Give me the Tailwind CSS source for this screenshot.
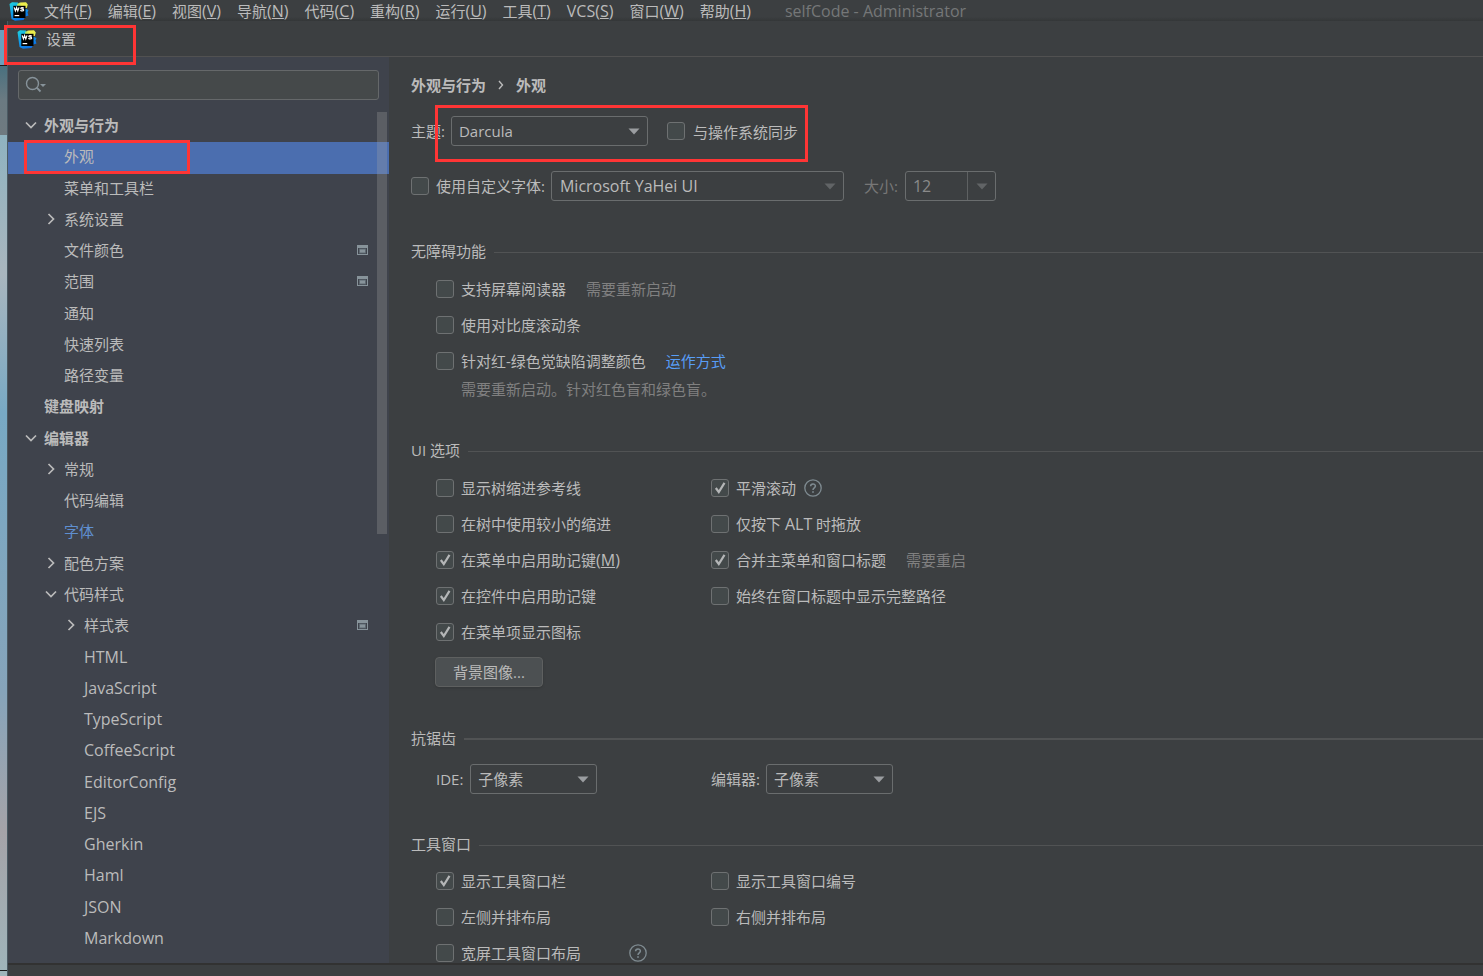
<!DOCTYPE html>
<html lang="zh-CN">
<head>
<meta charset="utf-8">
<title>设置</title>
<script src="https://cdn.jsdelivr.net/npm/@tailwindcss/browser@4"></script>
</head>
<body class="bg-[#3c3f41]">
<svg class="absolute size-0" aria-hidden="true">
  <defs>
    <linearGradient id="wsg" x1="0" y1="0" x2="0.5" y2="1">
      <stop offset="0" stop-color="#20d3dc"/><stop offset="0.45" stop-color="#11a5e8"/><stop offset="1" stop-color="#0a70e6"/>
    </linearGradient>
    <linearGradient id="wsy" x1="0" y1="0" x2="1" y2="0">
      <stop offset="0" stop-color="#8fe07a"/><stop offset="0.4" stop-color="#f2ee4a"/><stop offset="1" stop-color="#e6ee50"/>
    </linearGradient>
    <symbol id="ws" viewBox="0 0 20 20">
      <path d="M0.5 3 L3 1.2 L9 1.5 L10 6 L17 8 L19.5 9 L18.5 11.5 L19.5 14.5 L16.5 15.5 L14.5 19 L6 19.8 L2.5 18 Z" fill="url(#wsg)"/>
      <path d="M8 3 L11 1.5 L17 1.2 L18.8 3.5 L17.8 7 L8 7 Z" fill="url(#wsy)"/>
      <rect x="4.3" y="4.8" width="12.2" height="12.2" fill="#000"/>
      <path d="M5.2 6.4 L6.4 10 L7.6 6.6 L8.8 10 L10 6.4" fill="none" stroke="#fff" stroke-width="1.2"/>
      <path d="M14.8 7.2 C13.7 6.2 11.8 6.4 11.8 7.3 C12 8.4 14.8 7.8 14.7 9.1 C14.5 10.2 12.4 10.1 11.4 9.2" fill="none" stroke="#fff" stroke-width="1.2"/>
      <rect x="5.6" y="14" width="4.6" height="1.2" fill="#fff"/>
    </symbol>
    <symbol id="down" viewBox="0 0 12 8"><path d="M1 1.5 L6 6.5 L11 1.5" fill="none" stroke="currentColor" stroke-width="1.7"/></symbol>
    <symbol id="right" viewBox="0 0 8 12"><path d="M1.5 1 L6.5 6 L1.5 11" fill="none" stroke="currentColor" stroke-width="1.7"/></symbol>
    <symbol id="tri" viewBox="0 0 12 7"><path d="M0.5 0.5 H11.5 L6 6.5 Z" fill="currentColor"/></symbol>
    <symbol id="proj" viewBox="0 0 11 10"><path d="M0 0 H11 V10 H0 Z M1 3 V9 H10 V3 Z" fill="#87939a" fill-rule="evenodd"/><rect x="2.5" y="4" width="6" height="4" fill="#87939a" stroke="#5f6a72" stroke-width="1"/></symbol>
    <symbol id="tick" viewBox="0 0 18 18"><path d="M4.8 9 L7.8 13 L13.5 3.8" fill="none" stroke="#b4b6b7" stroke-width="2.2"/></symbol>
    <symbol id="help" viewBox="0 0 18 18"><circle cx="9" cy="9" r="8.2" fill="none" stroke="#7f8b91" stroke-width="1.3"/><path d="M6.6 7.3 C6.6 4.2 11.4 4.2 11.4 7.1 C11.4 8.9 9 8.9 9 11" fill="none" stroke="#7f8b91" stroke-width="1.5"/><rect x="8.2" y="12.2" width="1.6" height="1.6" fill="#7f8b91"/></symbol>
  </defs>
</svg>
<div class="relative flex h-screen flex-col overflow-hidden bg-[#3c3f41] font-['Open_Sans','Noto_Sans_CJK_SC',sans-serif] text-[15px] leading-5 text-[#bbbbbb]">
  <header class="flex h-[21px] shrink-0 items-center bg-gradient-to-b from-[#3c3f41] from-80% to-[#343738] pl-[9px]">
    <svg class="mr-[7px] size-5 shrink-0"><use href="#ws"/></svg>
    <nav class="flex whitespace-nowrap [&_span]:text-base [&_span]:leading-5">
      <button class="px-2">文件<span>(<u>F</u>)</span></button>
      <button class="px-2">编辑<span>(<u>E</u>)</span></button>
      <button class="px-2">视图<span>(<u>V</u>)</span></button>
      <button class="px-2">导航<span>(<u>N</u>)</span></button>
      <button class="px-2">代码<span>(<u>C</u>)</span></button>
      <button class="px-2">重构<span>(<u>R</u>)</span></button>
      <button class="px-2">运行<span>(<u>U</u>)</span></button>
      <button class="px-2">工具<span>(<u>T</u>)</span></button>
      <button class="px-2"><span>VCS(<u>S</u>)</span></button>
      <button class="px-2">窗口<span>(<u>W</u>)</span></button>
      <button class="px-2">帮助<span>(<u>H</u>)</span></button>
    </nav>
    <span class="ml-[26px] whitespace-nowrap text-base leading-5 text-[#757778]">selfCode - Administrator</span>
  </header>

  <div class="flex min-h-0 flex-1">
    <div class="flex w-2 shrink-0 flex-col border-r border-[#4b5a63]">
      <div class="h-[9px] bg-[#33373a]"></div>
      <div class="h-[35px] bg-[#6b9fbd]"></div>
      <div class="h-px bg-[#1c1c1c]"></div>
      <div class="h-[69px] bg-gradient-to-b from-[#48707f] via-[#6b7a82] to-[#6f7a80]"></div>
      <div class="flex flex-1 flex-col">
        <div class="flex-1 bg-gradient-to-b from-[#8fb3c0] via-[#a9b6be] to-[#78a9c4]"></div>
        <div class="flex-1 bg-gradient-to-b from-[#78a9c4] to-[#86a4ba]"></div>
        <div class="flex-1 bg-gradient-to-b from-[#86a4ba] via-[#a5a3a8] to-[#9fb4ba]"></div>
      </div>
      <div class="h-px bg-[#1c1c1c]"></div>
      <div class="h-[5px] bg-[#9fb4ba]"></div>
    </div>

    <div class="flex min-w-0 flex-1 flex-col">
      <div class="flex h-9 shrink-0 items-center border-b border-[#515151] pl-[9px]">
        <svg class="mr-[9px] size-5 shrink-0"><use href="#ws"/></svg>
        <h1>设置</h1>
      </div>

      <div class="flex min-h-0 flex-1 border-b-2 border-[#323232]">
        <aside class="flex w-[381px] shrink-0 flex-col bg-[#3f434c] pb-2 pt-[13px]">
          <label class="mx-[10px] flex h-[30px] shrink-0 items-center rounded-[3px] border border-[#65686a] bg-[#45494a] pl-1.5 text-[#87939a]">
            <svg class="h-5 w-6 shrink-0" viewBox="0 0 24 20"><circle cx="7.5" cy="8.5" r="6" fill="none" stroke="currentColor" stroke-width="1.4"/><path d="M11.7 12.7 L15.5 16.5" stroke="currentColor" stroke-width="1.8"/><path d="M15 9 H21 L18 12 Z" fill="currentColor"/></svg>
            <input type="text" aria-label="搜索设置" class="min-w-0 flex-1 bg-transparent text-[#bbbbbb] outline-none">
          </label>
          <div class="relative mt-[11px] flex min-h-0 flex-1 flex-col">
            <ul class="grid flex-1 auto-rows-fr [&>li]:flex [&>li]:items-center [&>li]:pb-[3px] [&>li>svg]:shrink-0">
              <li class="pl-[17px] font-bold"><svg class="mr-[7px] h-2 w-3"><use href="#down"/></svg>外观与行为</li>
              <li class="bg-[#4b6eaf] pl-14">外观</li>
              <li class="pl-14">菜单和工具栏</li>
              <li class="pl-[39px]"><svg class="mr-[9px] h-3 w-2"><use href="#right"/></svg>系统设置</li>
              <li class="justify-between pl-14 pr-[21px]">文件颜色<svg class="h-[10px] w-[11px]"><use href="#proj"/></svg></li>
              <li class="justify-between pl-14 pr-[21px]">范围<svg class="h-[10px] w-[11px]"><use href="#proj"/></svg></li>
              <li class="pl-14">通知</li>
              <li class="pl-14">快速列表</li>
              <li class="pl-14">路径变量</li>
              <li class="pl-9 font-bold">键盘映射</li>
              <li class="pl-[17px] font-bold"><svg class="mr-[7px] h-2 w-3"><use href="#down"/></svg>编辑器</li>
              <li class="pl-[39px]"><svg class="mr-[9px] h-3 w-2"><use href="#right"/></svg>常规</li>
              <li class="pl-14">代码编辑</li>
              <li class="pl-14 text-[#5f8fd0]">字体</li>
              <li class="pl-[39px]"><svg class="mr-[9px] h-3 w-2"><use href="#right"/></svg>配色方案</li>
              <li class="pl-[37px]"><svg class="mr-[7px] h-2 w-3"><use href="#down"/></svg>代码样式</li>
              <li class="pl-[59px] pr-[21px]"><svg class="mr-[9px] h-3 w-2"><use href="#right"/></svg>样式表<svg class="ml-auto h-[10px] w-[11px]"><use href="#proj"/></svg></li>
              <li class="pl-[76px] text-base leading-5">HTML</li>
              <li class="pl-[76px] text-base leading-5">JavaScript</li>
              <li class="pl-[76px] text-base leading-5">TypeScript</li>
              <li class="pl-[76px] text-base leading-5">CoffeeScript</li>
              <li class="pl-[76px] text-base leading-5">EditorConfig</li>
              <li class="pl-[76px] text-base leading-5">EJS</li>
              <li class="pl-[76px] text-base leading-5">Gherkin</li>
              <li class="pl-[76px] text-base leading-5">Haml</li>
              <li class="pl-[76px] text-base leading-5">JSON</li>
              <li class="pl-[76px] text-base leading-5">Markdown</li>
            </ul>
            <div class="absolute right-0.5 top-px h-1/2 w-[10px] bg-[#a6a6a6]/28"></div>
          </div>
        </aside>

        <main class="flex min-w-0 flex-1 flex-col overflow-hidden whitespace-nowrap pl-[22px] pt-[17px] [&>*]:shrink-0">
          <div class="flex h-[22px] items-center font-bold">外观与行为<svg class="mx-3 h-[10px] w-[6px]" viewBox="0 0 6 10"><path d="M1 1 L4.5 5 L1 9" fill="none" stroke="#bbbbbb" stroke-width="1.4"/></svg>外观</div>

          <div class="mt-5 flex h-[30px] items-center">
            <label for="theme">主题:</label>
            <div class="relative ml-1.5 w-[197px] text-[#9a9da0]">
              <select id="theme" class="block h-[30px] w-full appearance-none rounded-[3px] border border-[#6a6d6e] bg-[#3c3f41] px-[7px] text-[#bbbbbb]"><option>Darcula</option></select>
              <svg class="pointer-events-none absolute right-2 top-3 h-[7px] w-3"><use href="#tri"/></svg>
            </div>
            <label class="ml-[19px] flex items-center gap-2"><input type="checkbox" class="size-[18px] appearance-none rounded-[3px] border border-[#6e7172] bg-[#43494a]"><span class="pt-0.5">与操作系统同步</span></label>
          </div>

          <div class="mt-[25px] flex h-[30px] items-center">
            <label class="flex items-center gap-[7px]"><input type="checkbox" class="size-[18px] appearance-none rounded-[3px] border border-[#6e7172] bg-[#43494a]">使用自定义字体:</label>
            <div class="relative ml-1.5 w-[293px] text-[#616466]">
              <select aria-label="字体" class="block h-[30px] w-full appearance-none rounded-[3px] border border-[#6a6d6e] bg-[#3c3f41] px-2 text-base leading-5 text-[#bbbbbb]"><option>Microsoft YaHei UI</option></select>
              <svg class="pointer-events-none absolute right-2 top-3 h-[7px] w-3"><use href="#tri"/></svg>
            </div>
            <label for="size" class="ml-5 text-[#777777]">大小:</label>
            <div class="relative ml-[7px] w-[91px] text-[#616466]">
              <select id="size" class="block h-[30px] w-full appearance-none rounded-[3px] border border-[#6a6d6e] bg-[#3c3f41] px-[7px] text-base leading-5 text-[#8a8a8a]"><option>12</option></select>
              <div class="pointer-events-none absolute inset-y-px right-7 w-px bg-[#5e6162]"></div>
              <svg class="pointer-events-none absolute right-2 top-3 h-[7px] w-3"><use href="#tri"/></svg>
            </div>
          </div>

          <h2 class="mt-10 flex h-5 items-center gap-2">无障碍功能<span class="mt-0.5 h-px flex-1 bg-[#515354]"></span></h2>
          <div class="mt-[10px] flex flex-col pl-[25px]">
            <div class="flex h-9 items-center gap-5"><label class="flex items-center gap-[7px]"><input type="checkbox" class="size-[18px] appearance-none rounded-[3px] border border-[#6e7172] bg-[#43494a]">支持屏幕阅读器</label><span class="text-[#808080]">需要重新启动</span></div>
            <div class="flex h-9 items-center"><label class="flex items-center gap-[7px]"><input type="checkbox" class="size-[18px] appearance-none rounded-[3px] border border-[#6e7172] bg-[#43494a]">使用对比度滚动条</label></div>
            <div class="flex h-9 items-center gap-5"><label class="flex items-center gap-[7px]"><input type="checkbox" class="size-[18px] appearance-none rounded-[3px] border border-[#6e7172] bg-[#43494a]">针对红-绿色觉缺陷调整颜色</label><a href="#" class="text-[#589df6]">运作方式</a></div>
            <p class="pl-[25px] text-[#808080]">需要重新启动。针对红色盲和绿色盲。</p>
          </div>

          <h2 class="mt-[41px] flex h-5 items-center gap-2">UI 选项<span class="mt-0.5 h-px flex-1 bg-[#515354]"></span></h2>
          <div class="mt-[10px] grid grid-cols-[275px_1fr] auto-rows-[36px] items-center pl-[25px]">
            <label class="flex items-center gap-[7px]"><input type="checkbox" class="size-[18px] appearance-none rounded-[3px] border border-[#6e7172] bg-[#43494a]">显示树缩进参考线</label>
            <div class="flex items-center gap-2"><label class="flex items-center gap-[7px]"><span class="relative size-[18px]"><input type="checkbox" checked class="peer block size-[18px] appearance-none rounded-[3px] border border-[#6e7172] bg-[#43494a]"><svg class="pointer-events-none absolute inset-0 hidden size-[18px] peer-checked:block"><use href="#tick"/></svg></span>平滑滚动</label><svg class="size-[18px]"><use href="#help"/></svg></div>
            <label class="flex items-center gap-[7px]"><input type="checkbox" class="size-[18px] appearance-none rounded-[3px] border border-[#6e7172] bg-[#43494a]">在树中使用较小的缩进</label>
            <label class="flex items-center gap-[7px]"><input type="checkbox" class="size-[18px] appearance-none rounded-[3px] border border-[#6e7172] bg-[#43494a]"><span>仅按下 <span class="text-base leading-5">ALT</span> 时拖放</span></label>
            <label class="flex items-center gap-[7px]"><span class="relative size-[18px]"><input type="checkbox" checked class="peer block size-[18px] appearance-none rounded-[3px] border border-[#6e7172] bg-[#43494a]"><svg class="pointer-events-none absolute inset-0 hidden size-[18px] peer-checked:block"><use href="#tick"/></svg></span><span>在菜单中启用助记键<span class="text-base leading-5">(<u>M</u>)</span></span></label>
            <div class="flex items-center gap-5"><label class="flex items-center gap-[7px]"><span class="relative size-[18px]"><input type="checkbox" checked class="peer block size-[18px] appearance-none rounded-[3px] border border-[#6e7172] bg-[#43494a]"><svg class="pointer-events-none absolute inset-0 hidden size-[18px] peer-checked:block"><use href="#tick"/></svg></span>合并主菜单和窗口标题</label><span class="text-[#808080]">需要重启</span></div>
            <label class="flex items-center gap-[7px]"><span class="relative size-[18px]"><input type="checkbox" checked class="peer block size-[18px] appearance-none rounded-[3px] border border-[#6e7172] bg-[#43494a]"><svg class="pointer-events-none absolute inset-0 hidden size-[18px] peer-checked:block"><use href="#tick"/></svg></span>在控件中启用助记键</label>
            <label class="flex items-center gap-[7px]"><input type="checkbox" class="size-[18px] appearance-none rounded-[3px] border border-[#6e7172] bg-[#43494a]">始终在窗口标题中显示完整路径</label>
            <label class="flex items-center gap-[7px]"><span class="relative size-[18px]"><input type="checkbox" checked class="peer block size-[18px] appearance-none rounded-[3px] border border-[#6e7172] bg-[#43494a]"><svg class="pointer-events-none absolute inset-0 hidden size-[18px] peer-checked:block"><use href="#tick"/></svg></span>在菜单项显示图标</label>
          </div>
          <button class="ml-6 mt-[7px] h-[30px] w-[108px] rounded-[4px] border border-[#5e6060] bg-[#4c5052] shadow-sm">背景图像...</button>

          <h2 class="mt-[41px] flex h-5 items-center gap-2">抗锯齿<span class="mt-0.5 h-0.5 flex-1 bg-[#515354]"></span></h2>
          <div class="mt-4 grid grid-cols-[275px_1fr] pl-[25px]">
            <div class="flex items-center"><label for="aa-ide">IDE:</label>
              <div class="relative ml-[7px] w-[127px] text-[#9a9da0]">
                <select id="aa-ide" class="block h-[30px] w-full appearance-none rounded-[3px] border border-[#6a6d6e] bg-[#3c3f41] px-[7px] text-[#bbbbbb]"><option>子像素</option></select>
                <svg class="pointer-events-none absolute right-2 top-3 h-[7px] w-3"><use href="#tri"/></svg>
              </div>
            </div>
            <div class="flex items-center"><label for="aa-ed">编辑器:</label>
              <div class="relative ml-1.5 w-[127px] text-[#9a9da0]">
                <select id="aa-ed" class="block h-[30px] w-full appearance-none rounded-[3px] border border-[#6a6d6e] bg-[#3c3f41] px-[7px] text-[#bbbbbb]"><option>子像素</option></select>
                <svg class="pointer-events-none absolute right-2 top-3 h-[7px] w-3"><use href="#tri"/></svg>
              </div>
            </div>
          </div>

          <h2 class="mt-10 flex h-5 items-center gap-2">工具窗口<span class="mt-0.5 h-px flex-1 bg-[#515354]"></span></h2>
          <div class="mt-[9px] grid grid-cols-[275px_1fr] auto-rows-[36px] items-center pl-[25px]">
            <label class="flex items-center gap-[7px]"><span class="relative size-[18px]"><input type="checkbox" checked class="peer block size-[18px] appearance-none rounded-[3px] border border-[#6e7172] bg-[#43494a]"><svg class="pointer-events-none absolute inset-0 hidden size-[18px] peer-checked:block"><use href="#tick"/></svg></span>显示工具窗口栏</label>
            <label class="flex items-center gap-[7px]"><input type="checkbox" class="size-[18px] appearance-none rounded-[3px] border border-[#6e7172] bg-[#43494a]">显示工具窗口编号</label>
            <label class="flex items-center gap-[7px]"><input type="checkbox" class="size-[18px] appearance-none rounded-[3px] border border-[#6e7172] bg-[#43494a]">左侧并排布局</label>
            <label class="flex items-center gap-[7px]"><input type="checkbox" class="size-[18px] appearance-none rounded-[3px] border border-[#6e7172] bg-[#43494a]">右侧并排布局</label>
            <div class="flex items-center gap-12"><label class="flex items-center gap-[7px]"><input type="checkbox" class="size-[18px] appearance-none rounded-[3px] border border-[#6e7172] bg-[#43494a]">宽屏工具窗口布局</label><svg class="size-[18px]"><use href="#help"/></svg></div>
          </div>
        </main>
      </div>
      <footer class="h-[11px] shrink-0"></footer>
    </div>
  </div>

  <div class="pointer-events-none absolute left-1 top-[25px] h-10 w-[132px] border-3 border-[#ff3535]"></div>
  <div class="pointer-events-none absolute left-6 top-[140px] h-[34px] w-[166px] border-3 border-[#ff3535]"></div>
  <div class="pointer-events-none absolute left-[435px] top-[105px] h-[57px] w-[373px] border-3 border-[#ff3535]"></div>
</div>
</body>
</html>
